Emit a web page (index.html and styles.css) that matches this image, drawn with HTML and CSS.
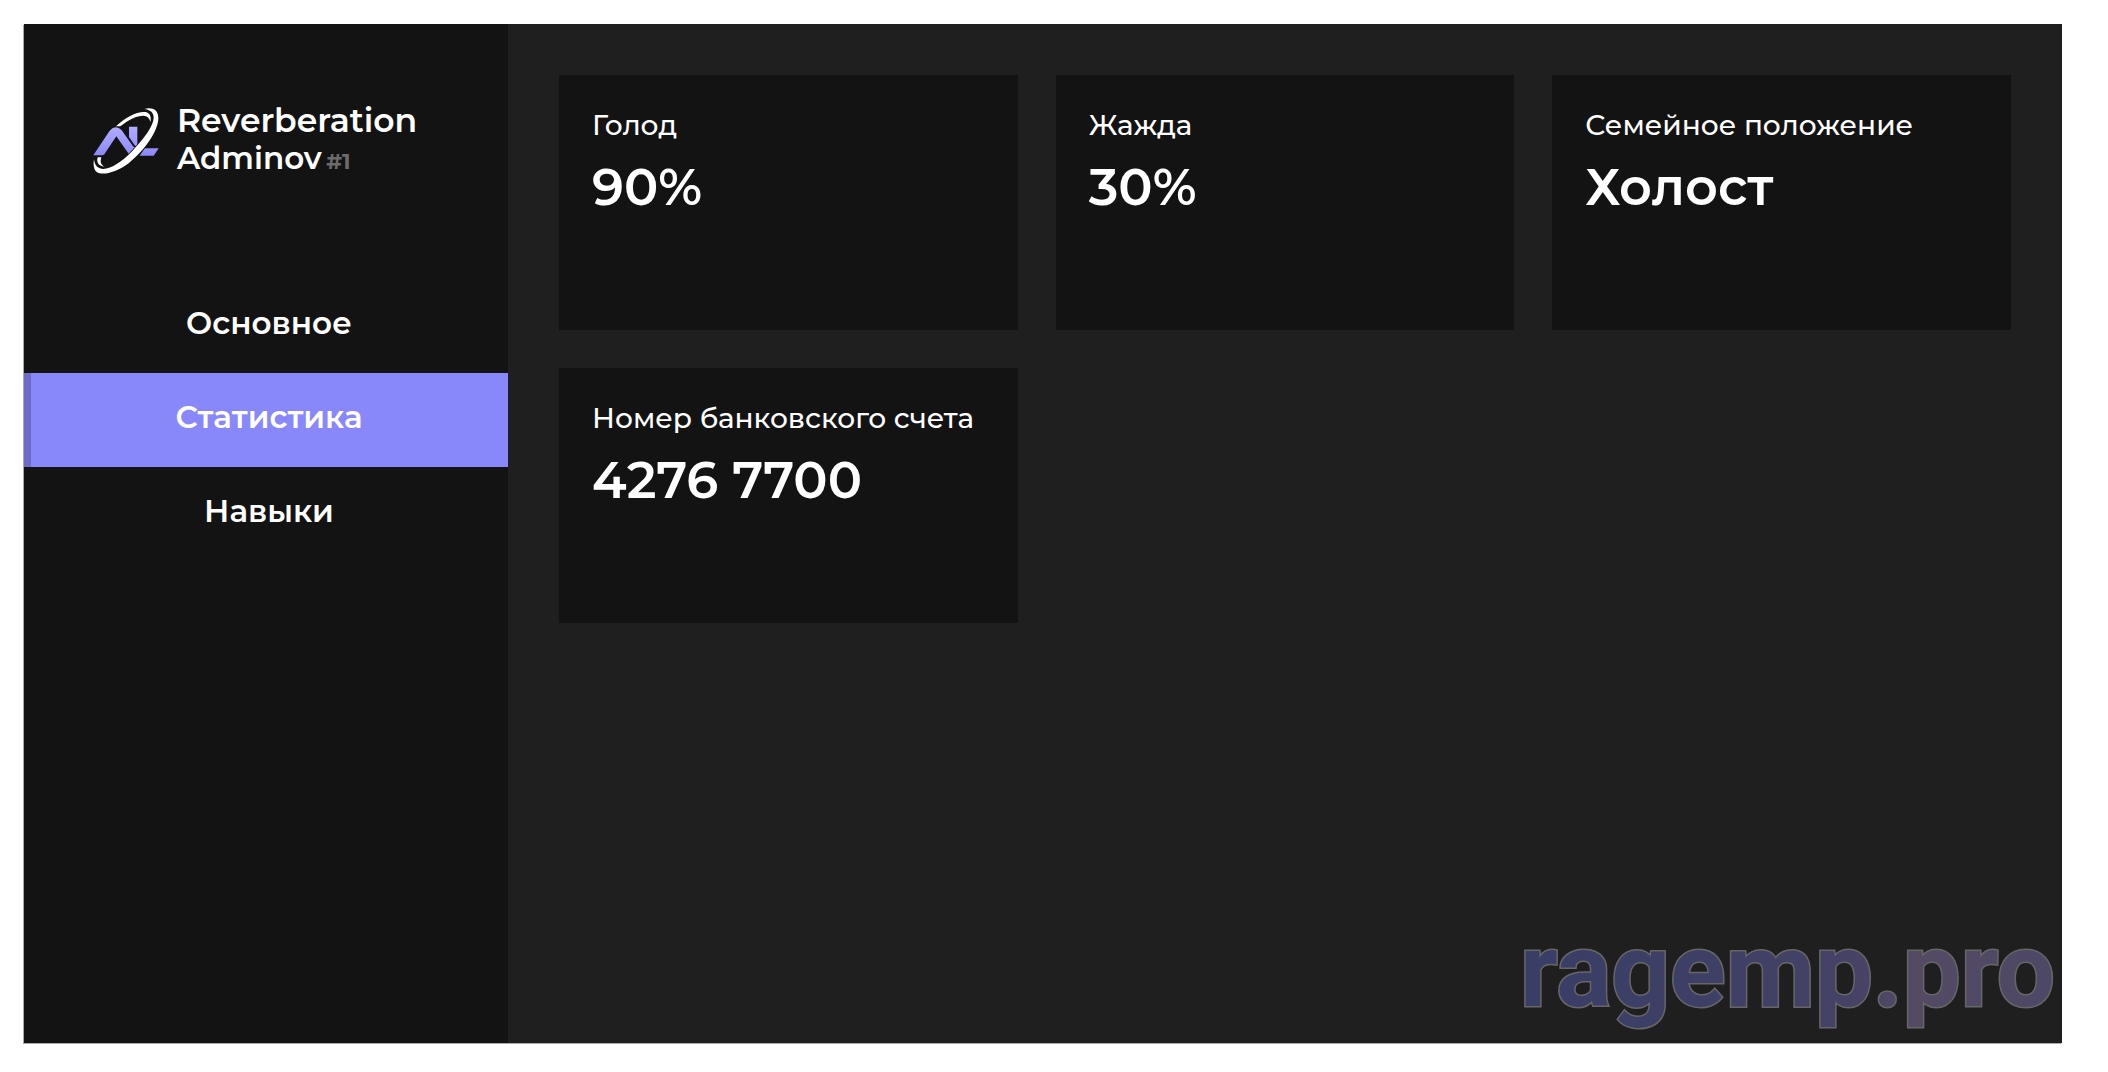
FILE: index.html
```html
<!DOCTYPE html>
<html lang="ru">
<head>
<meta charset="utf-8">
<meta name="viewport" content="width=device-width, initial-scale=1">
<title>Reverberation Adminov</title>
<link rel="stylesheet" href="styles.css">
</head>
<body>
<div class="panel">
  <aside class="sidebar">
    <header class="brand">
      <svg class="brand-logo" viewBox="24 20 204 204" aria-hidden="true">
        <defs>
          <linearGradient id="violet" x1="0" y1="75" x2="0" y2="168" gradientUnits="userSpaceOnUse">
            <stop offset="0" stop-color="#b3aeff"/>
            <stop offset="1" stop-color="#8a88fb"/>
          </linearGradient>
        </defs>
        <g fill="#fff">
          <path d="M96 78C125 50 160 32 185 35C198 38 203 50 199 65C197 53 190 47 178 46C158 46 135 57 109 78Z"/>
          <path d="M41 171C37 184 42 198 62 199C50 194 48 184 52 171Z"/>
        </g>
        <g fill="url(#violet)">
          <path d="M28 165L77 91Q95 71 113 90L147 138Q152 143 166 143L148 165H137L97 108L61 162Q58 165 53 165Z"/>
          <path d="M135 79H160V139Q155 139 151 133L135 110Z"/>
          <path d="M182 144H224L209 166H167Z"/>
        </g>
        <path fill="#fff" stroke="#131313" stroke-width="5" paint-order="stroke" d="M181 26C205 20 222 28 223 52C224 92 180 152 135 188C95 218 55 226 38 215C29 208 27 192 30 177C32 195 40 205 58 206C82 205 115 184 145 152C180 114 208 78 209 52C209 36 198 28 181 26Z"/>
      </svg>
      <h1 class="brand-name">
        <span class="brand-title">Reverberation</span>
        <span class="brand-subtitle">Adminov <span class="brand-number">#1</span></span>
      </h1>
    </header>
    <nav class="menu">
      <button class="menu-item" type="button">Основное</button>
      <button class="menu-item menu-item-active" type="button" aria-current="page">Статистика</button>
      <button class="menu-item" type="button">Навыки</button>
    </nav>
  </aside>
  <main class="content">
    <dl class="cards">
      <div class="card"><dt class="card-label">Голод</dt><dd class="card-value">90%</dd></div>
      <div class="card"><dt class="card-label">Жажда</dt><dd class="card-value">30%</dd></div>
      <div class="card"><dt class="card-label">Семейное положение</dt><dd class="card-value">Холост</dd></div>
      <div class="card"><dt class="card-label">Номер банковского счета</dt><dd class="card-value">4276 7700</dd></div>
    </dl>
  </main>
  <svg class="watermark" viewBox="0 0 560 160">
    <defs>
      <linearGradient id="mark" x1="20" y1="0" x2="552" y2="0" gradientUnits="userSpaceOnUse">
        <stop offset="0" stop-color="#393e66"/>
        <stop offset="0.3" stop-color="#3d3f66"/>
        <stop offset="0.62" stop-color="#454266"/>
        <stop offset="0.74" stop-color="#544a64"/>
        <stop offset="1" stop-color="#4d4866"/>
      </linearGradient>
    </defs>
    <text class="watermark-text" x="553" y="123" text-anchor="end" fill="url(#mark)">ragemp.pro</text>
  </svg>
</div>
</body>
</html>
```
FILE: styles.css
```css
* {
  box-sizing: border-box;
}

body {
  display: flex;
  min-height: 100vh;
  margin: 0;
  padding: 24px 46px 29px 24px;
  background: #fff;
  color: #fff;
  font-family: Montserrat, Inter, "Noto Sans", sans-serif;
}

.panel {
  position: relative;
  display: flex;
  flex: 1;
  background: #1f1f1f;
  box-shadow: -1px 1px #a8a8a8;
}

.sidebar {
  flex: 0 0 484px;
  padding-top: 77px;
  background: #131313;
}

.brand {
  display: flex;
  align-items: center;
  gap: 17px;
  padding-left: 68px;
}

.brand-logo {
  width: 68px;
  height: 68px;
}

.brand-name {
  display: flex;
  flex-direction: column;
  margin: 0;
  font-weight: 600;
  line-height: 38px;
}

.brand-title {
  font-size: 33px;
}

.brand-subtitle {
  font-size: 31px;
}

.brand-number {
  margin-left: -4px;
  color: #6b6b6b;
  font-size: 22px;
  font-weight: 700;
}

.menu {
  display: flex;
  flex-direction: column;
  margin-top: 98px;
}

.menu-item {
  height: 94px;
  padding: 0 0 6px 6px;
  border: 0;
  background: none;
  color: inherit;
  font: inherit;
  font-size: 31px;
  font-weight: 600;
  cursor: pointer;
}

.menu-item-active {
  background: #8988fa;
  box-shadow: inset 7px 0 #6e6bc6;
}

.content {
  flex: 1;
  padding: 51px;
}

.cards {
  display: grid;
  grid-template-columns: repeat(3, 1fr);
  gap: 38px;
  margin: 0;
}

.card {
  min-height: 255px;
  padding: 32px 33px;
  background: #131313;
}

.card-label {
  font-size: 28px;
  font-weight: 500;
  line-height: 36px;
}

.card-value {
  margin: 12px 0 0;
  font-size: 51px;
  font-weight: 600;
  line-height: 64px;
}

.watermark {
  position: absolute;
  right: 0;
  bottom: 0;
  width: 560px;
  height: 160px;
  pointer-events: none;
}

.watermark-text {
  font-family: Roboto, sans-serif;
  font-size: 103px;
  font-weight: 700;
  stroke: #666;
  stroke-width: 3px;
  paint-order: stroke;
}
```
